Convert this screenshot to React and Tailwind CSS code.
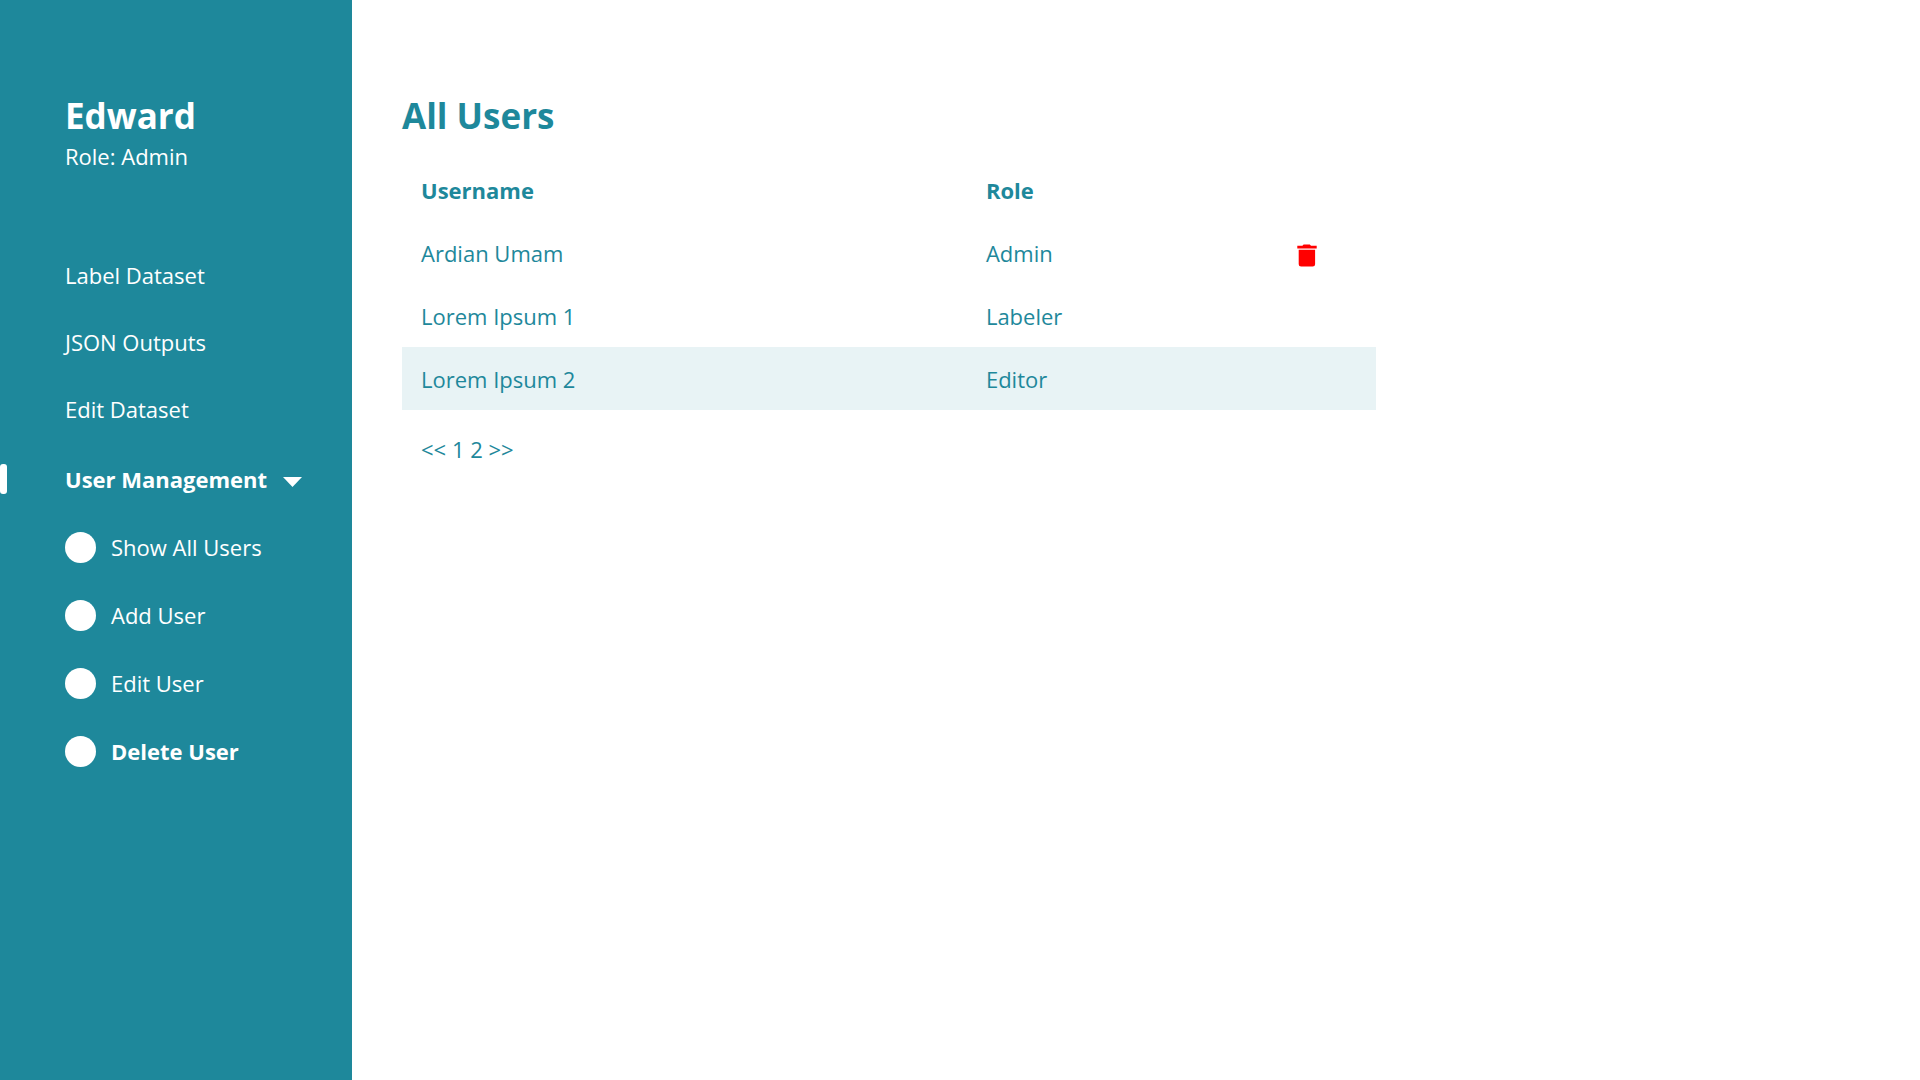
const mainLinks = ['Label Dataset', 'JSON Outputs', 'Edit Dataset'];

const userLinks = [
  { label: 'Show All Users' },
  { label: 'Add User' },
  { label: 'Edit User' },
  { label: 'Delete User', active: true },
];

const users = [
  { name: 'Ardian Umam', role: 'Admin', deletable: true },
  { name: 'Lorem Ipsum 1', role: 'Labeler' },
  { name: 'Lorem Ipsum 2', role: 'Editor', highlighted: true },
];

function TrashIcon() {
  return (
    <svg width="20" height="23" viewBox="0 0 20 23" fill="#ff0000" aria-hidden="true">
      <path d="M6.6 0.4h6.2l1.2 1.3h5.7v2.7H0.3V1.7h5.1z" />
      <path d="M1.7 5.8h16.4v14.4a2.4 2.4 0 0 1-2.4 2.4H4.1a2.4 2.4 0 0 1-2.4-2.4z" />
    </svg>
  );
}

function Sidebar() {
  return (
    <aside className="w-88 shrink-0 bg-[#1e889b] pt-[91px] text-white">
      <div className="pl-[65px]">
        <h2 className="text-[35px] leading-[50px] font-bold">Edward</h2>
        <p className="leading-[30px]">Role: Admin</p>
      </div>
      <nav className="mt-[70px]">
        <ul>
          {mainLinks.map((label) => (
            <li key={label}>
              <a href="#" className="flex h-[67px] items-center pl-[65px]">
                {label}
              </a>
            </li>
          ))}
          <li className="mt-[3px]">
            <button type="button" aria-expanded="true" className="flex h-17 w-full items-center font-bold">
              <span className="h-[30px] w-[7px] rounded-[3px] bg-white" />
              <span className="ml-[58px]">User Management</span>
              <svg className="mt-1.5 ml-4" width="19" height="10" viewBox="0 0 19 10" fill="white" aria-hidden="true">
                <path d="M0 0h19L9.5 10z" />
              </svg>
            </button>
            <ul>
              {userLinks.map(({ label, active }) => (
                <li key={label}>
                  <a
                    href="#"
                    className={active ? 'flex h-17 items-center gap-[15px] pl-[65px] font-bold' : 'flex h-17 items-center gap-[15px] pl-[65px]'}
                  >
                    <span className="size-[31px] rounded-full bg-white" />
                    {label}
                  </a>
                </li>
              ))}
            </ul>
          </li>
        </ul>
      </nav>
    </aside>
  );
}

function UsersTable() {
  return (
    <table className="w-full max-w-[974px] table-fixed text-left">
      <thead>
        <tr className="h-[63px]">
          <th className="w-[58%] pl-[19px] font-bold">Username</th>
          <th className="w-[32%] pl-[19px] font-bold">Role</th>
          <td />
        </tr>
      </thead>
      <tbody>
        {users.map(({ name, role, deletable, highlighted }) => (
          <tr key={name} className={highlighted ? 'h-[63px] bg-[#e8f3f5]' : 'h-[63px]'}>
            <td className="pl-[19px]">{name}</td>
            <td className="pl-[19px]">{role}</td>
            <td className="pt-1.5 pl-[18px]">
              {deletable && (
                <button type="button" aria-label={`Delete ${name}`} className="block">
                  <TrashIcon />
                </button>
              )}
            </td>
          </tr>
        ))}
      </tbody>
    </table>
  );
}

export default function App() {
  return (
    <div className="flex min-h-screen bg-white font-['Open_Sans',sans-serif] text-[22px] leading-8">
      <Sidebar />
      <main className="min-w-0 flex-1 px-[50px] pt-[91px] text-[#1e889b]">
        <h1 className="text-[35px] leading-[50px] font-bold">All Users</h1>
        <div className="mt-[17px]">
          <UsersTable />
        </div>
        <nav aria-label="Pagination" className="mt-[23px] pl-[19px]">
          <a href="#">&lt;&lt;</a> <a href="#">1</a> <a href="#">2</a> <a href="#">&gt;&gt;</a>
        </nav>
      </main>
    </div>
  );
}
